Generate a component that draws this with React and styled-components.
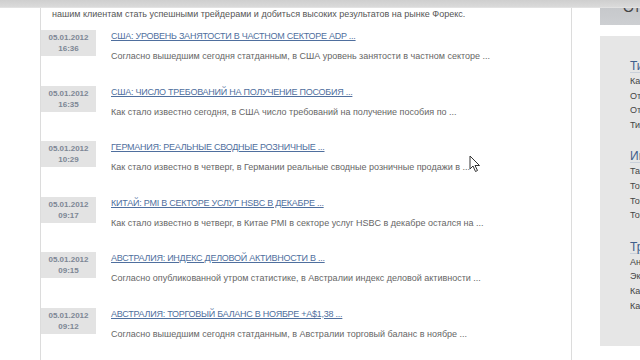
import React from 'react';
import styled, { createGlobalStyle } from 'styled-components';

const GlobalStyle = createGlobalStyle`
	html, body {
		margin: 0;
		padding: 0;
		background: #fff;
		overflow: hidden;
	}
	body {
		font-family: 'Liberation Sans', Arial, sans-serif;
		width: 640px;
		height: 360px;
	}
`;

const TopBar = styled.div`
	position: fixed;
	top: 0;
	left: 0;
	right: 0;
	height: 7px;
	background: linear-gradient(#cfcfcf, #dadada);
	border-bottom: 1px solid #e2e2e2;
	z-index: 2;
`;

const Page = styled.div`
	display: flex;
	height: 360px;
	overflow: hidden;
`;

const Gutter = styled.div`
	width: 40px;
	flex-shrink: 0;
`;

const Main = styled.div`
	width: 530px;
	flex-shrink: 0;
	border-left: 1px solid #dcdcdc;
	border-right: 1px solid #dcdcdc;
`;

const Intro = styled.p`
	margin: -5px 0 0;
	padding: 0 12px 0 11px;
	font-size: 9px;
	line-height: 13px;
	color: #555;
`;

const NewsList = styled.div`
	padding-top: 9px;
`;

const Item = styled.div`
	display: flex;
	align-items: flex-start;
	gap: 15px;
	height: 55.5px;
`;

const DateBox = styled.div`
	width: 55px;
	height: 26px;
	flex-shrink: 0;
	box-sizing: border-box;
	padding-top: 2px;
	background: #e3e3e3;
	color: #7d8795;
	font-size: 8px;
	font-weight: bold;
	line-height: 11px;
	text-align: center;
`;

const Body = styled.div`
	display: flex;
	flex-direction: column;
	gap: 8px;
`;

const Title = styled.a`
	font-size: 9px;
	line-height: 12px;
	letter-spacing: -0.25px;
	color: #4f6f9e;
	text-decoration: underline;
	text-transform: uppercase;
	cursor: pointer;
`;

const Text = styled.div`
	font-size: 9px;
	line-height: 12px;
	color: #666;
`;

const Spacer = styled.div`
	width: 28px;
	flex-shrink: 0;
`;

const Sidebar = styled.div`
	width: 40px;
	flex-shrink: 0;
	overflow: hidden;
	display: flex;
	flex-direction: column;
`;

const SideButton = styled.div`
	width: 200px;
	height: 18px;
	margin-top: 7px;
	background: linear-gradient(#c6c8cb, #cdcfd2);
	color: #444;
	font-size: 14px;
	line-height: 0;
	padding-left: 23px;
	box-sizing: border-box;
	white-space: nowrap;
`;

const Panel = styled.div`
	width: 200px;
	height: 310px;
	margin-top: 11px;
	background: #e6e6e6;
	padding: 24px 0 0 30px;
	box-sizing: border-box;
	display: flex;
	flex-direction: column;
	gap: 18px;
`;

const Group = styled.div`
	display: flex;
	flex-direction: column;
`;

const GroupTitle = styled.div`
	font-size: 12px;
	line-height: 12px;
	color: #3f5f8c;
	border-bottom: 1px solid #c9d0da;
	margin-bottom: 1px;
	white-space: nowrap;
`;

const GroupLink = styled.div`
	font-size: 9px;
	line-height: 14.6px;
	color: #444;
	white-space: nowrap;
`;

const Cursor = styled.svg`
	position: absolute;
	left: 469px;
	top: 155px;
	z-index: 3;
`;

const news = [
	{
		date: '05.01.2012',
		time: '16:36',
		title: 'США: уровень занятости в частном секторе ADP ...',
		text: 'Согласно вышедшим сегодня статданным, в США уровень занятости в частном секторе ...'
	},
	{
		date: '05.01.2012',
		time: '16:35',
		title: 'США: число требований на получение пособия ...',
		text: 'Как стало известно сегодня, в США число требований на получение пособия по ...'
	},
	{
		date: '05.01.2012',
		time: '10:29',
		title: 'Германия: реальные сводные розничные ...',
		text: 'Как стало известно в четверг, в Германии реальные сводные розничные продажи в ...'
	},
	{
		date: '05.01.2012',
		time: '09:17',
		title: 'Китай: PMI в секторе услуг HSBC в декабре ...',
		text: 'Как стало известно в четверг, в Китае PMI в секторе услуг HSBC в декабре остался на ...'
	},
	{
		date: '05.01.2012',
		time: '09:15',
		title: 'Австралия: индекс деловой активности в ...',
		text: 'Согласно опубликованной утром статистике, в Австралии индекс деловой активности ...'
	},
	{
		date: '05.01.2012',
		time: '09:12',
		title: 'Австралия: торговый баланс в ноябре +A$1,38 ...',
		text: 'Согласно вышедшим сегодня статданным, в Австралии торговый баланс в ноябре ...'
	}
];

const groups = [
	{ title: 'Типы счетов', links: ['Как открыть счет', 'Открыть реальный счет', 'Открыть демо-счет', 'Типы счетов'] },
	{ title: 'Инструменты', links: ['Таблица спецификаций', 'Торговые условия', 'Торговые платформы', 'Торговые сигналы'] },
	{ title: 'Трейдерам', links: ['Аналитика', 'Экономический календарь', 'Калькулятор трейдера', 'Калькулятор пунктов'] }
];

const App = () => (
	<>
		<GlobalStyle />
		<TopBar />
		<Page>
			<Gutter />
			<Main>
				<Intro>
					Мы предлагаем широкий спектр услуг и современные торговые инструменты, которые помогают
					<br />
					нашим клиентам стать успешными трейдерами и добиться высоких результатов на рынке Форекс.
				</Intro>
				<NewsList>
					{news.map((item) => (
						<Item key={item.time}>
							<DateBox>
								{item.date}
								<br />
								{item.time}
							</DateBox>
							<Body>
								<Title>{item.title}</Title>
								<Text>{item.text}</Text>
							</Body>
						</Item>
					))}
				</NewsList>
			</Main>
			<Spacer />
			<Sidebar>
				<SideButton>Открыть счет</SideButton>
				<Panel>
					{groups.map((group) => (
						<Group key={group.title}>
							<GroupTitle>{group.title}</GroupTitle>
							{group.links.map((link) => (
								<GroupLink key={link}>{link}</GroupLink>
							))}
						</Group>
					))}
				</Panel>
			</Sidebar>
		</Page>
		<Cursor width="12" height="18" viewBox="0 0 12 18">
			<path d="M1 1 L1 14 L4 11 L6.5 16.5 L8.5 15.5 L6 10.5 L10.5 10.5 Z" fill="#fff" stroke="#333" strokeWidth="1" strokeLinejoin="round" />
		</Cursor>
	</>
);

export default App;
